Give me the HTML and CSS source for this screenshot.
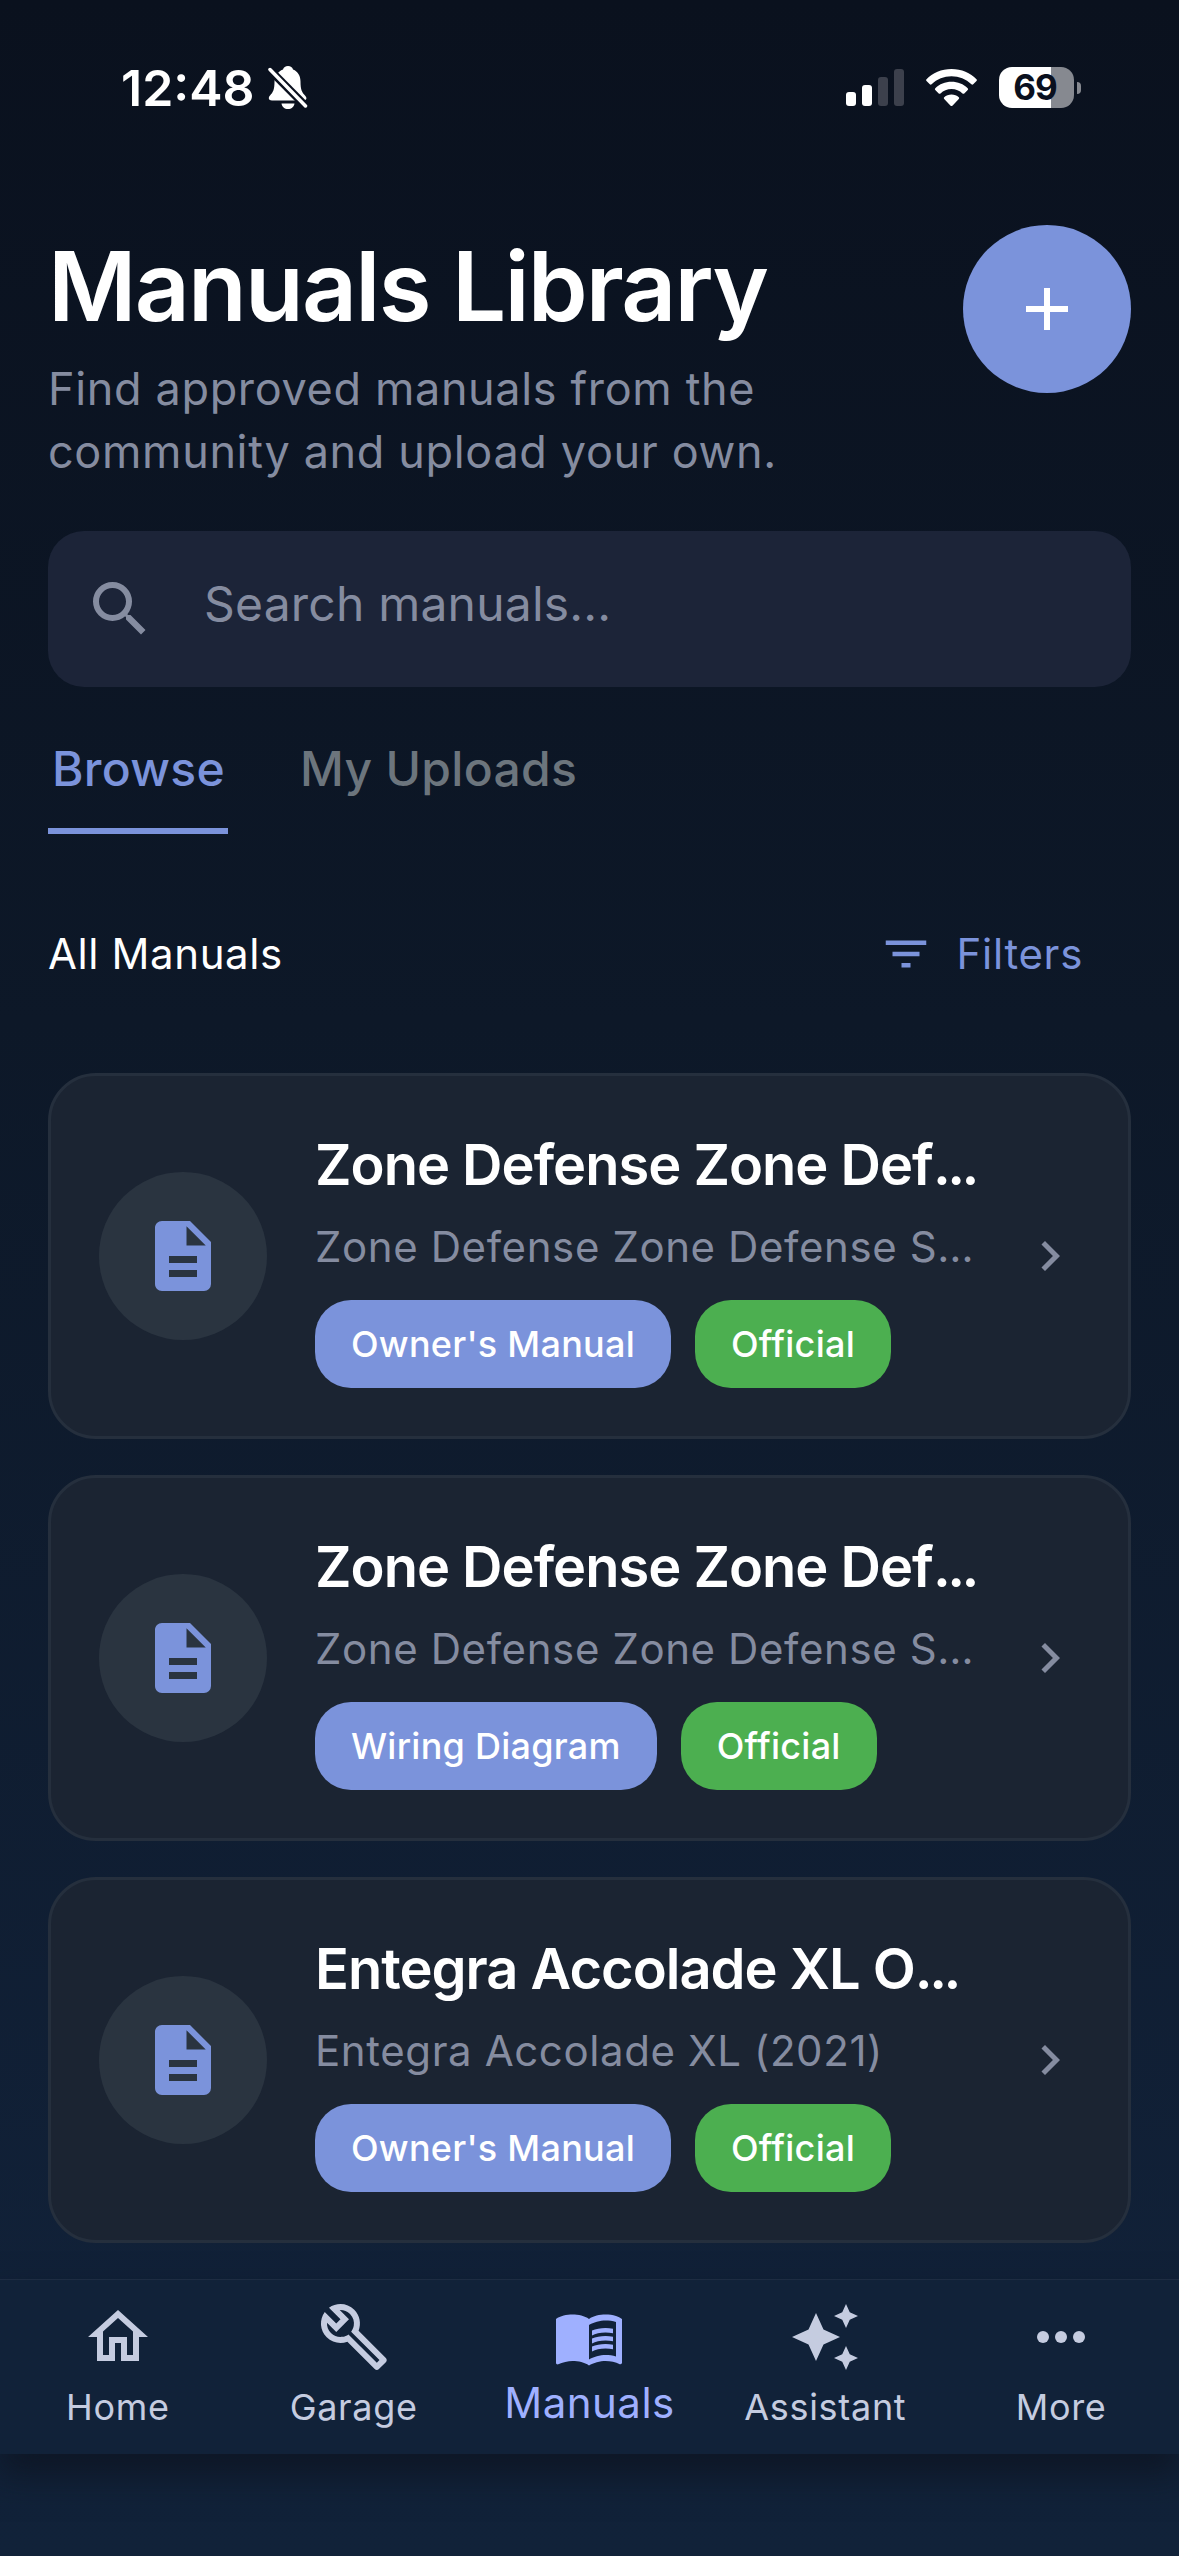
FILE: index.html
```html
<!DOCTYPE html>
<html lang="en">
<head>
  <meta charset="UTF-8">
  <meta name="viewport" content="width=device-width, initial-scale=1.0">
  <title>Manuals Library</title>
  <link rel="stylesheet" href="styles.css">
</head>
<body>
  <!-- shared icon shapes -->
  <svg class="sprite" width="0" height="0">
    <symbol id="icon-document" viewBox="0 0 24 24">
      <path d="M13,9H18.5L13,3.5V9M6,2H14L20,8V20A2,2 0 0,1 18,22H6C4.89,22 4,21.1 4,20V4C4,2.89 4.89,2 6,2M8,12V14H16V12H8M8,16V18H16V16H8Z"/>
    </symbol>
    <symbol id="icon-chevron" viewBox="0 0 24 24">
      <path d="M8.59,16.58L13.17,12L8.59,7.41L10,6L16,12L10,18L8.59,16.58Z"/>
    </symbol>
  </svg>

  <div class="status-bar">
    <div class="status-left">
      <span class="time">12:48</span>
      <svg class="bell" viewBox="0 0 40 44">
        <path d="M20 0c2.500 0 4.500 1.500 5 3.500c5 2 7.500 6.500 7.500 12c0 8 1.500 11 4.500 14c2.500 2.500 1.500 5-1.500 5H4c-3.500 0-4-3-2-5c3-3 4.500-6 4.500-14c0-5.500 3.500-10 8.500-12c.500-2 2.500-3.500 5-3.500zM13.500 37.500h13c-.5 3.500-3 5.500-6.500 5.500s-6-2-6.500-5.500z" fill="#fff"/>
        <path d="M2 4L38 40.500" stroke="#0a101e" stroke-width="8"/>
        <path d="M2 3.500L37.500 40" stroke="#fff" stroke-width="3.500" stroke-linecap="round"/>
      </svg>
    </div>
    <div class="status-right">
      <div class="signal">
        <span class="bar bar-1"></span>
        <span class="bar bar-2"></span>
        <span class="bar bar-3"></span>
        <span class="bar bar-4"></span>
      </div>
      <svg class="wifi" viewBox="0 0 51 38">
        <path d="M25.500 0C35.500 0 44.500 4 50.500 10.200q.8.900 0 1.800l-3.300 3.300q-.9.800-1.800 0C40 10.200 33 7.300 25.500 7.300S11 10.200 5.600 15.300q-.9.800-1.800 0L.5 12q-.8-.9 0-1.800C6.500 4 15.500 0 25.500 0z"/>
        <path d="M25.500 12.800c6.300 0 12 2.400 16.200 6.400q.9.900 0 1.800l-3.400 3.400q-.9.800-1.800 0c-2.900-2.700-6.700-4.300-11-4.300s-8.100 1.600-11 4.300q-.9.800-1.800 0L9.300 21q-.9-.9 0-1.800c4.200-4 9.900-6.400 16.200-6.400z"/>
        <path d="M25.500 25.500c2.800 0 5.400 1 7.300 2.700q.9.800 0 1.700l-6.400 6.800q-.9.800-1.800 0l-6.400-6.800q-.9-.9 0-1.700c1.900-1.700 4.500-2.700 7.300-2.700z"/>
      </svg>
      <div class="battery">
        <span class="battery-body">69</span>
        <span class="battery-tip"></span>
      </div>
    </div>
  </div>

  <main class="page">
    <header class="header">
      <div class="header-text">
        <h1>Manuals Library</h1>
        <p class="subtitle">Find approved manuals from the<br>community and upload your own.</p>
      </div>
      <button class="add-button" aria-label="Add manual">
        <svg viewBox="0 0 24 24"><path d="M19,13H13V19H11V13H5V11H11V5H13V11H19V13Z"/></svg>
      </button>
    </header>

    <div class="search">
      <svg viewBox="0 0 24 24"><path d="M9.500,3A6.500,6.500 0 0,1 16,9.500C16,11.110 15.410,12.590 14.440,13.730L14.710,14H15.500L20.500,19L19,20.500L14,15.500V14.710L13.730,14.440C12.590,15.410 11.110,16 9.500,16A6.500,6.500 0 0,1 3,9.500A6.500,6.500 0 0,1 9.500,3M9.500,5C7,5 5,7 5,9.500C5,12 7,14 9.500,14C12,14 14,12 14,9.500C14,7 12,5 9.500,5Z"/></svg>
      <span>Search manuals...</span>
    </div>

    <nav class="tabs">
      <a class="tab active">Browse</a>
      <a class="tab">My Uploads</a>
    </nav>

    <div class="list-header">
      <span class="list-title">All Manuals</span>
      <button class="filters">
        <svg viewBox="0 0 24 24"><path d="M10,18H14V16H10V18M3,6V8H21V6H3M6,13H18V11H6V13Z"/></svg>
        <span>Filters</span>
      </button>
    </div>

    <div class="cards">
      <article class="card">
        <div class="card-icon"><svg><use href="#icon-document"/></svg></div>
        <div class="card-body">
          <h2>Zone Defense Zone Def<span class="dots">...</span></h2>
          <p>Zone Defense Zone Defense S…</p>
          <div class="chips">
            <span class="chip">Owner's Manual</span>
            <span class="chip official">Official</span>
          </div>
        </div>
        <svg class="chevron"><use href="#icon-chevron"/></svg>
      </article>

      <article class="card">
        <div class="card-icon"><svg><use href="#icon-document"/></svg></div>
        <div class="card-body">
          <h2>Zone Defense Zone Def<span class="dots">...</span></h2>
          <p>Zone Defense Zone Defense S…</p>
          <div class="chips">
            <span class="chip">Wiring Diagram</span>
            <span class="chip official">Official</span>
          </div>
        </div>
        <svg class="chevron"><use href="#icon-chevron"/></svg>
      </article>

      <article class="card">
        <div class="card-icon"><svg><use href="#icon-document"/></svg></div>
        <div class="card-body">
          <h2>Entegra Accolade XL O<span class="dots">...</span></h2>
          <p>Entegra Accolade XL (2021)</p>
          <div class="chips">
            <span class="chip">Owner's Manual</span>
            <span class="chip official">Official</span>
          </div>
        </div>
        <svg class="chevron"><use href="#icon-chevron"/></svg>
      </article>
    </div>
  </main>

  <nav class="tab-bar">
    <a class="nav-item">
      <svg viewBox="0 0 24 24"><path d="M12,5.690L17,10.190V18H15V12H9V18H7V10.190L12,5.690M12,3L2,12H5V20H11V14H13V20H19V12H22"/></svg>
      <span>Home</span>
    </a>
    <a class="nav-item">
      <svg viewBox="0 0 24 24"><path d="M22.610 18.990l-9.080-9.080c.93-2.340.45-5.100-1.440-7C9.790.61 6.210.4 3.660 2.260L7.500 6.110 6.080 7.520 2.250 3.690C.39 6.230.6 9.820 2.900 12.110c1.860 1.860 4.570 2.350 6.890 1.480l9.110 9.110c.39.39 1.020.39 1.410 0l2.300-2.300c.4-.38.4-1.010 0-1.410zm-3 1.600l-9.460-9.460c-.61.45-1.290.72-2 .82-1.360.2-2.790-.21-3.830-1.250C3.370 9.760 2.930 8.500 3 7.260l3.090 3.090 4.240-4.240-3.090-3.090c1.240-.07 2.490.37 3.440 1.310 1.080 1.080 1.490 2.570 1.240 3.960-.12.71-.42 1.370-.88 1.960l9.450 9.450-.88.89z"/></svg>
      <span>Garage</span>
    </a>
    <a class="nav-item active">
      <svg viewBox="0 0 24 24">
        <path d="M21 5c-1.110-.35-2.330-.5-3.500-.5-1.950 0-4.050.4-5.500 1.500-1.450-1.100-3.550-1.500-5.500-1.500S2.450 4.900 1 6v14.650c0 .25.25.5.5.5.1 0 .15-.05.25-.05C3.100 20.450 5.050 20 6.500 20c1.950 0 4.050.4 5.500 1.500 1.350-.85 3.800-1.500 5.500-1.500 1.650 0 3.350.3 4.750 1.050.1.050.15.050.25.050.25 0 .5-.25.5-.5V6c-.6-.45-1.250-.75-2-1zm0 13.500c-1.100-.35-2.300-.5-3.500-.5-1.700 0-4.150.65-5.500 1.500V8c1.350-.85 3.800-1.500 5.500-1.500 1.200 0 2.400.15 3.500.5v11.500z"/>
        <path d="M17.500 10.500c.88 0 1.730.09 2.500.26V9.240c-.79-.15-1.640-.24-2.500-.24-1.700 0-3.240.29-4.500.83v1.660c1.130-.64 2.700-.99 4.500-.99zM13 12.490v1.660c1.130-.64 2.700-.99 4.500-.99.88 0 1.730.09 2.500.26V11.900c-.79-.15-1.640-.24-2.500-.24-1.700 0-3.240.3-4.500.83zM17.500 14.330c-1.700 0-3.240.29-4.500.83v1.660c1.130-.64 2.700-.99 4.500-.99.88 0 1.730.09 2.500.26v-1.520c-.79-.16-1.640-.24-2.500-.24z"/>
      </svg>
      <span>Manuals</span>
    </a>
    <a class="nav-item">
      <svg viewBox="0 0 24 24"><path d="M19 9l1.250-2.750L23 5l-2.750-1.250L19 1l-1.250 2.750L15 5l2.750 1.250L19 9zm-7.500.5L9 4 6.500 9.500 1 12l5.500 2.500L9 20l2.500-5.500L17 12l-5.500-2.500zM19 15l-1.250 2.750L15 19l2.750 1.250L19 23l1.250-2.750L23 19l-2.750-1.250L19 15z"/></svg>
      <span>Assistant</span>
    </a>
    <a class="nav-item">
      <svg viewBox="0 0 24 24"><circle cx="6" cy="12" r="2"/><circle cx="12" cy="12" r="2"/><circle cx="18" cy="12" r="2"/></svg>
      <span>More</span>
    </a>
  </nav>
</body>
</html>
```
FILE: styles.css
```css
:root {
  --primary: #7b93db;
  --muted: #858ca0;
  --success: #4caf50;
  --card: #1b2432;
}

* {
  box-sizing: border-box;
}

body {
  margin: 0;
  width: 1179px;
  height: 2556px;
  overflow: hidden;
  display: flex;
  flex-direction: column;
  font-family: Inter, "Liberation Sans", sans-serif;
  color: #fff;
  background: linear-gradient(180deg, #0a111e 0%, #0d1828 40%, #112138 90%, #112239 100%);
}

h1, h2, p {
  margin: 0;
}

button {
  border: none;
  padding: 0;
  font-family: inherit;
  background: none;
}

svg {
  display: block;
  fill: currentColor;
  flex-shrink: 0;
}

.sprite {
  position: absolute;
}

/* status bar */
.status-bar {
  height: 177px;
  padding: 0 98px 2px 121px;
  display: flex;
  align-items: center;
  justify-content: space-between;
}

.status-left, .status-right {
  display: flex;
  align-items: center;
}

.status-left {
  gap: 13px;
}

.time {
  font-size: 50px;
  font-weight: 600;
}

.bell {
  width: 40px;
  height: 44px;
}

.signal {
  display: flex;
  align-items: flex-end;
  gap: 6px;
  height: 37px;
}

.bar {
  width: 10px;
  border-radius: 3px;
  background: #fff;
}

.bar-1 {
  height: 14px;
}

.bar-2 {
  height: 21px;
}

.bar-3 {
  height: 29px;
  background: #3c404c;
}

.bar-4 {
  height: 37px;
  background: #3c404c;
}

.wifi {
  width: 51px;
  height: 38px;
  margin: 0 22px;
}

.battery {
  display: flex;
  align-items: center;
  gap: 3px;
}

.battery-body {
  width: 75px;
  height: 41px;
  padding-right: 3px;
  border-radius: 13px;
  background: linear-gradient(90deg, #fff 69%, #868990 69%);
  color: #0a101e;
  font-size: 35px;
  font-weight: 700;
  line-height: 41px;
  text-align: center;
  letter-spacing: -1px;
}

.battery-tip {
  width: 4px;
  height: 12px;
  border-radius: 0 4px 4px 0;
  background: #868990;
}

/* header */
.page {
  padding: 48px 48px 0;
}

.header {
  display: flex;
  justify-content: space-between;
}

h1 {
  margin-top: 3px;
  font-size: 96px;
  font-weight: 600;
  line-height: 116px;
  letter-spacing: -1.8px;
}

.subtitle {
  margin-top: 13px;
  font-size: 45px;
  line-height: 63px;
  letter-spacing: 0.65px;
  color: var(--muted);
}

.add-button {
  width: 168px;
  height: 168px;
  border-radius: 50%;
  background: var(--primary);
  color: #fff;
  display: flex;
  align-items: center;
  justify-content: center;
}

.add-button svg {
  width: 72px;
  height: 72px;
}

/* search */
.search {
  margin-top: 48px;
  height: 156px;
  padding: 0 36px;
  border-radius: 36px;
  background: #1c2438;
  color: var(--muted);
  display: flex;
  align-items: center;
  gap: 48px;
}

.search svg {
  width: 72px;
  height: 72px;
}

.search span {
  font-size: 48px;
  line-height: 72px;
  letter-spacing: 0.2px;
  padding-bottom: 10px;
}

/* tabs */
.tabs {
  margin-top: 45px;
  display: flex;
  gap: 68px;
}

.tab {
  height: 102px;
  padding: 0 3px 0 4px;
  font-size: 48px;
  font-weight: 500;
  line-height: 74px;
  letter-spacing: 0.3px;
  color: #6c757d;
}

.tab.active {
  color: var(--primary);
  border-bottom: 6px solid var(--primary);
}

.list-header {
  margin-top: 60px;
  height: 119px;
  padding-right: 48px;
  display: flex;
  align-items: center;
  justify-content: space-between;
}

.list-title {
  font-size: 42px;
  letter-spacing: 0.6px;
}

.filters {
  display: flex;
  align-items: center;
  gap: 24px;
  color: var(--primary);
  font-size: 42px;
  letter-spacing: 0.7px;
}

.filters svg {
  width: 54px;
  height: 54px;
}

/* cards */
.cards {
  margin-top: 60px;
  display: flex;
  flex-direction: column;
  gap: 36px;
}

.card {
  height: 366px;
  padding: 0 48px;
  border: 3px solid #252f3d;
  border-radius: 48px;
  background: var(--card);
  display: flex;
  align-items: center;
}

.card-icon {
  width: 168px;
  height: 168px;
  margin-right: 48px;
  border-radius: 50%;
  background: #2a3440;
  color: var(--primary);
  display: flex;
  align-items: center;
  justify-content: center;
}

.card-icon svg {
  width: 84px;
  height: 84px;
}

.card-body {
  flex: 1;
  min-width: 0;
  padding-top: 3px;
}

.card h2 {
  font-size: 56px;
  font-weight: 600;
  line-height: 76px;
  letter-spacing: -1px;
  white-space: nowrap;
}

.card h2 .dots {
  letter-spacing: -3.5px;
}

.card p {
  margin-top: 14px;
  font-size: 42px;
  line-height: 60px;
  letter-spacing: 0.6px;
  color: var(--muted);
  white-space: nowrap;
}

.chips {
  margin-top: 23px;
  display: flex;
  gap: 24px;
}

.chip {
  height: 88px;
  padding: 0 36px;
  border-radius: 36px;
  background: var(--primary);
  font-size: 36px;
  font-weight: 500;
  line-height: 88px;
  letter-spacing: 0.25px;
}

.chip.official {
  background: var(--success);
}

.chevron {
  width: 60px;
  height: 60px;
  color: var(--muted);
}

/* bottom navigation */
.tab-bar {
  margin-top: auto;
  margin-bottom: 102px;
  flex-shrink: 0;
  height: 175px;
  border-top: 1px solid #1e2c42;
  background: #112239;
  box-shadow: 0 20px 32px rgba(12, 17, 28, 0.65);
  display: grid;
  grid-template-columns: repeat(5, 1fr);
}

.nav-item {
  padding-top: 21px;
  display: flex;
  flex-direction: column;
  align-items: center;
  color: #c5cce0;
  font-size: 36px;
  line-height: 44px;
  letter-spacing: 0.7px;
}

.nav-item svg {
  width: 72px;
  height: 72px;
}

.nav-item span {
  margin-top: 12px;
}

.nav-item.active {
  color: #9fb0ff;
  font-size: 42px;
  letter-spacing: 0.5px;
}

.nav-item.active span {
  margin-top: 8px;
}
```
